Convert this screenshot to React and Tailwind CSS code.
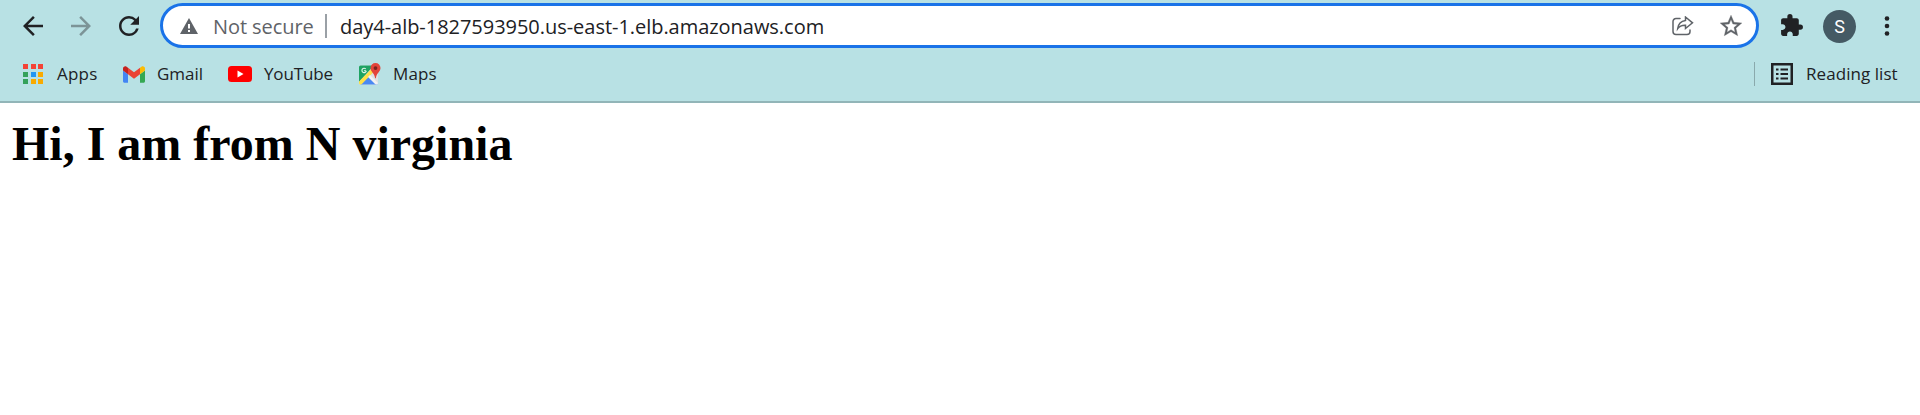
const ICON = "block shrink-0";

function NavIcon({ d, className }) {
  return (
    <svg viewBox="0 0 24 24" className={`${ICON} size-[30px] ${className}`} fill="currentColor">
      <path d={d} />
    </svg>
  );
}

function AppsIcon() {
  const colors = ["#f44336", "#f44336", "#f44336", "#34a15a", "#2196f3", "#f9ab00", "#34a15a", "#f9ab00", "#f9ab00"];
  return (
    <div className="grid size-5 shrink-0 grid-cols-3 gap-[2.5px]">
      {colors.map((c, i) => (
        <span key={i} style={{ backgroundColor: c }} />
      ))}
    </div>
  );
}

function GmailIcon() {
  return (
    <svg viewBox="52 42 88 66" className={`${ICON} h-[17px] w-[22px]`}>
      <path fill="#4285f4" d="M58 108h14V74L52 59v43c0 3.3 2.7 6 6 6" />
      <path fill="#34a853" d="M120 108h14c3.3 0 6-2.7 6-6V59l-20 15" />
      <path fill="#fbbc04" d="M120 48v26l20-15v-8c0-7.4-8.5-11.6-14.4-7.2" />
      <path fill="#ea4335" d="M72 74V48l24 18 24-18v26L96 92" />
      <path fill="#c5221f" d="M52 51v8l20 15V48l-5.600-4.200C60.500 39.400 52 43.600 52 51" />
    </svg>
  );
}

function YouTubeIcon() {
  return (
    <svg viewBox="0 0 24 16" className={`${ICON} h-4 w-6`}>
      <rect width="24" height="16" rx="3.500" fill="#f00" />
      <path d="M9.500 4.600v6.800l6-3.400z" fill="#fff" />
    </svg>
  );
}

function MapsIcon() {
  return (
    <svg viewBox="0 0 24 24" className={`${ICON} -mt-px size-6`}>
      <defs>
        <clipPath id="map-tile">
          <rect x="1" y="3.500" width="19" height="19" rx="1.500" />
        </clipPath>
      </defs>
      <g clipPath="url(#map-tile)">
        <rect width="24" height="24" fill="#dde1e3" />
        <path d="M0 0h19L1 20z" fill="#1ea362" />
        <path d="M0 25 11.500 13.500 23 25z" fill="#4a89f3" />
        <path d="M0 20.500 15 5.500l2 3L2 24H0z" fill="#ffe047" />
        <path d="m10 15 2-2L22 23h-4z" fill="#f2f2f2" />
      </g>
      <path d="M8.200 8.800H5.900m1.900-1.800A2.200 2.200 0 1 0 8.300 8.900" fill="none" stroke="#dff4e8" strokeWidth="1.100" />
      <path d="M17.500 1a5 5 0 0 0-5 5.100c0 3.700 4.200 5.400 4.600 10.200h.8c.4-4.800 4.600-6.500 4.600-10.200A5 5 0 0 0 17.500 1z" fill="#e3443a" />
      <circle cx="17.500" cy="6.100" r="1.900" fill="#7b231e" />
    </svg>
  );
}

function Bookmark({ icon, label, className, textClass }) {
  return (
    <div className={`flex shrink-0 items-center ${className}`}>
      {icon}
      <span className={`whitespace-nowrap ${textClass}`}>{label}</span>
    </div>
  );
}

export default function App() {
  return (
    <div className="h-[415px] w-full overflow-hidden bg-white font-['Open_Sans','Noto_Sans',sans-serif]">
      <header className="h-[103px] border-b-2 border-[#92b5b8] bg-[#b8e1e4] text-[#202124]">
        <div className="flex h-[51px] items-center pl-[18px]">
          <NavIcon d="M20 11H7.830l5.590-5.590L12 4l-8 8 8 8 1.410-1.410L7.830 13H20v-2z" />
          <NavIcon className="ml-[18px] text-[#7c9497]" d="m12 4-1.410 1.410L16.170 11H4v2h12.170l-5.580 5.590L12 20l8-8z" />
          <NavIcon className="ml-[18px]" d="M17.650 6.350A7.958 7.958 0 0 0 12 4c-4.420 0-7.990 3.580-7.990 8s3.570 8 7.990 8c3.730 0 6.840-2.550 7.730-6h-2.080A5.990 5.990 0 0 1 12 18c-3.310 0-6-2.690-6-6s2.690-6 6-6c1.660 0 3.140.69 4.220 1.780L13 11h7V4l-2.350 2.350z" />

          <div className="ml-4 flex h-[45px] w-[1599px] shrink-0 items-center rounded-full border-3 border-[#1a73e8] bg-white pl-[17px]">
            <svg viewBox="0 0 18 16" className={`${ICON} h-4 w-[18px]`}>
              <path d="M9 0 18 16H0z" fill="#5f6368" />
              <path d="M8 6h2v4.500H8zM8 12h2v2H8z" fill="#fff" />
            </svg>
            <span className="ml-[15px] w-[112px] shrink-0 whitespace-nowrap pt-[2px] text-[20px] tracking-[-0.080px] text-[#5f6368]">Not secure</span>
            <span className="h-6 w-[2px] shrink-0 bg-[#9aa0a6]" />
            <span className="ml-[13px] whitespace-nowrap pt-[2px] text-[20px] tracking-[-0.035px]">day4-alb-1827593950.us-east-1.elb.amazonaws.com</span>
            <div className="ml-auto flex items-center pr-[12px] text-[#5f6368]">
              <svg viewBox="0 0 22 20" className={`${ICON} h-5 w-[22px]`} fill="none" stroke="currentColor" strokeWidth="1.500" strokeLinejoin="round" strokeLinecap="round">
                <path d="M8 2.500H4A3 3 0 0 0 1 5.500v10a3 3 0 0 0 3 3h11a3 3 0 0 0 3-3V14" />
                <path d="M13.500 1 20.500 6.800l-7 5.700V9.200c-3.500-.2-6 .9-7.800 3.400.5-4.300 3-7.600 7.800-8.200z" strokeLinejoin="miter" />
              </svg>
              <svg viewBox="0 0 24 24" className={`${ICON} ml-[24px] size-[26px]`} fill="currentColor" stroke="currentColor" strokeWidth="0.300">
                <path d="m22 9.240-7.190-.62L12 2 9.190 8.630 2 9.240l5.460 4.730L5.820 21 12 17.270 18.180 21l-1.630-7.030L22 9.240zM12 15.400l-3.760 2.270 1-4.280-3.320-2.880 4.380-.38L12 6.100l1.710 4.040 4.380.38-3.320 2.880 1 4.280L12 15.400z" />
              </svg>
            </div>
          </div>

          <svg viewBox="0 0 24 24" className={`${ICON} ml-5 size-[25px]`} fill="currentColor">
            <path d="M20.500 11H19V7c0-1.100-.9-2-2-2h-4V3.500a2.500 2.500 0 0 0-5 0V5H4c-1.100 0-1.990.9-1.990 2v3.800H3.500c1.490 0 2.700 1.210 2.700 2.700s-1.210 2.700-2.700 2.700H2V20c0 1.100.9 2 2 2h3.800v-1.500c0-1.490 1.210-2.700 2.700-2.700s2.700 1.210 2.700 2.700V22H17c1.100 0 2-.9 2-2v-4h1.500a2.500 2.500 0 0 0 0-5z" />
          </svg>
          <div className="ml-[19px] mt-[2px] flex size-[33px] shrink-0 items-center justify-center rounded-full bg-[#455a64] font-[Roboto,sans-serif] text-[18px] leading-none text-white">S</div>
          <svg viewBox="0 0 6 20" className={`${ICON} ml-[28px] h-5 w-[6px]`} fill="currentColor">
            <circle cx="3" cy="2.500" r="2.300" />
            <circle cx="3" cy="10" r="2.300" />
            <circle cx="3" cy="17.500" r="2.300" />
          </svg>
        </div>

        <div className="flex h-[46px] items-center pl-[23px] text-[17px]">
          <Bookmark icon={<AppsIcon />} label="Apps" className="w-[100px]" textClass="ml-[14px] tracking-[0.200px]" />
          <Bookmark icon={<GmailIcon />} label="Gmail" className="w-[105px]" textClass="ml-[12px] tracking-[0]" />
          <Bookmark icon={<YouTubeIcon />} label="YouTube" className="w-[130px]" textClass="ml-[12px] tracking-[-0.150px]" />
          <Bookmark icon={<MapsIcon />} label="Maps" className="w-[100px]" textClass="ml-[11px] tracking-[0.100px]" />
          <div className="ml-auto flex w-[166px] shrink-0 items-center">
            <span className="h-6 w-px bg-[#8aa9ac]" />
            <svg viewBox="0 0 22 22" className={`${ICON} ml-4 size-[22px]`}>
              <rect x="1.250" y="1.250" width="19.500" height="19.500" fill="none" stroke="currentColor" strokeWidth="2.500" />
              <path d="M5 6.500h2.500M5 11h2.500M5 15.500h2.500M9.500 6.500H17M9.500 11H17M9.500 15.500H17" stroke="currentColor" strokeWidth="2" />
            </svg>
            <span className="ml-[13px] whitespace-nowrap tracking-[0.060px]">Reading list</span>
          </div>
        </div>
      </header>

      <main className="px-3 pt-3">
        <h1 className="whitespace-nowrap font-['Liberation_Serif',serif] text-[48px] font-bold leading-[57px] text-black">Hi, I am from N virginia</h1>
      </main>
    </div>
  );
}
